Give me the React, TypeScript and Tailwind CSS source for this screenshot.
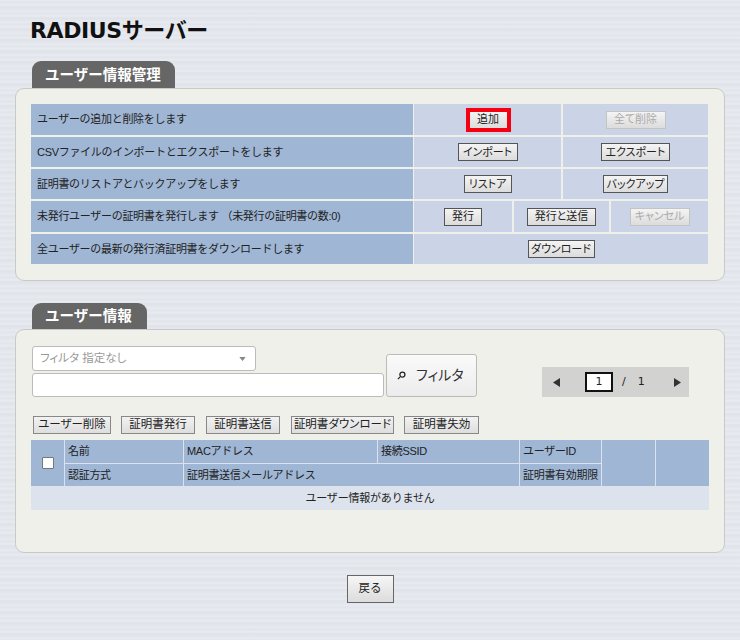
const font = "font-['Liberation_Sans','Noto_Sans_CJK_JP',sans-serif]";
const palt = "[font-feature-settings:'palt']";

function Btn({ label, w, disabled, red }: { label: string; w: string; disabled?: boolean; red?: boolean }) {
  return (
    <button
      className={`${w} shrink-0 whitespace-nowrap flex items-center justify-center text-[11px] leading-none [font-feature-settings:'palt'] bg-gradient-to-b from-[#f4f4f4] to-[#dcdcdc] ${
        red
          ? "ml-[1px] h-[24px] border-[4px] border-[#f40010] text-[#222]"
          : disabled
            ? "h-[18px] border border-[#c4c4c4] text-[#aaa]"
            : "h-[18px] border border-[#555] text-[#222]"
      }`}
    >
      {label}
    </button>
  );
}

function Cell({ className, children }: { className?: string; children: React.ReactNode }) {
  return <div className={`bg-[#cbd4e6] flex items-center justify-center ${className ?? ""}`}>{children}</div>;
}

function MgmtRow({ label, h, children }: { label: string; h: string; children: React.ReactNode }) {
  return (
    <div className={`flex gap-[1px] ${h}`}>
      <div className="w-[382px] bg-[#9fb6d4] flex items-center pl-[6px] text-[11px] tracking-[-0.3px] text-[#222] whitespace-pre">{label}</div>
      <div className="flex-1 flex gap-[2px]">{children}</div>
    </div>
  );
}

function Tab({ label, w, h }: { label: string; w: string; h: string }) {
  return (
    <div className={`${w} ${h} ml-[32px] pt-[2px] bg-[#666] rounded-t-[9px] text-white font-bold text-[14.5px] flex items-center pl-[13px]`}>
      {label}
    </div>
  );
}

function Small({ label, w }: { label: string; w: string }) {
  return (
    <button className={`${w} h-[18px] shrink-0 whitespace-nowrap flex items-center justify-center text-[11.5px] leading-none [font-feature-settings:'palt'] text-[#222] bg-gradient-to-b from-[#f2f2f2] to-[#dedede] border border-[#888]`}>
      {label}
    </button>
  );
}

function Th({ className, children }: { className?: string; children?: React.ReactNode }) {
  return <div className={`bg-[#9fb6d4] flex items-center pl-[3px] text-[11px] tracking-[-0.3px] text-[#222] whitespace-nowrap ${className ?? ""}`}>{children}</div>;
}

export default function App() {
  return (
    <div
      className={`${font} w-[740px] h-[640px] overflow-hidden flex flex-col bg-[#e4e7ed] bg-[repeating-linear-gradient(180deg,#e9ecf1_0px,#e1e4ea_2px,#e8ebf0_5px,#dfe2e8_7px,#e6e9ee_11px)]`}
    >
      <h1 className="ml-[30px] mt-[16px] h-[29px] leading-[29px] text-[22px] font-bold text-[#111] font-['DejaVu_Sans','Noto_Sans_CJK_JP',sans-serif] tracking-[-0.4px]">
        RADIUSサーバー
      </h1>

      <div className="mt-[16px]">
        <Tab label="ユーザー情報管理" w="w-[143px]" h="h-[27px]" />
      </div>
      <section className="mx-[15px] w-[710px] h-[193px] bg-[#f0f0ea] border border-[#c9c9c6] rounded-[9px] pt-[15px] pl-[15px]">
        <div className="flex flex-col gap-[2px] w-[677px]">
          <MgmtRow label="ユーザーの追加と削除をします" h="h-[31px]">
            <Cell className="flex-1"><Btn label="追加" w="w-[45px]" red /></Cell>
            <Cell className="w-[145px]"><Btn label="全て削除" w="w-[60px]" disabled /></Cell>
          </MgmtRow>
          <MgmtRow label="CSVファイルのインポートとエクスポートをします" h="h-[30px]">
            <Cell className="flex-1"><Btn label="インポート" w="w-[60px]" /></Cell>
            <Cell className="w-[145px]"><Btn label="エクスポート" w="w-[69px]" /></Cell>
          </MgmtRow>
          <MgmtRow label="証明書のリストアとバックアップをします" h="h-[30px]">
            <Cell className="flex-1"><Btn label="リストア" w="w-[48px]" /></Cell>
            <Cell className="w-[145px]"><Btn label="バックアップ" w="w-[65px]" /></Cell>
          </MgmtRow>
          <MgmtRow label="未発行ユーザーの証明書を発行します （未発行の証明書の数:0)" h="h-[31px]">
            <Cell className="flex-1"><Btn label="発行" w="w-[38px]" /></Cell>
            <Cell className="w-[95px]"><Btn label="発行と送信" w="w-[69px]" /></Cell>
            <Cell className="w-[97px]"><Btn label="キャンセル" w="w-[60px]" disabled /></Cell>
          </MgmtRow>
          <MgmtRow label="全ユーザーの最新の発行済証明書をダウンロードします" h="h-[30px]">
            <Cell className="flex-1"><Btn label="ダウンロード" w="w-[67px]" /></Cell>
          </MgmtRow>
        </div>
      </section>

      <div className="mt-[22px]">
        <Tab label="ユーザー情報" w="w-[115px]" h="h-[26px]" />
      </div>
      <section className="mx-[15px] w-[710px] h-[224px] bg-[#f0f0ea] border border-[#c9c9c6] rounded-[9px] pt-[16px] pl-[15px]">
        <div className="flex items-end h-[51px]">
          <div className="flex flex-col gap-[2px] w-[352px] ml-[1px]">
            <div className={`w-[224px] h-[25px] bg-white border border-[#bbb] rounded-[3px] flex items-center justify-between pl-[7px] pr-[9px] text-[11.5px] text-[#999] ${palt}`}>
              <span>フィルタ 指定なし</span>
              <svg width="7" height="4" viewBox="0 0 8 5"><path d="M0 0h8L4 5z" fill="#888" /></svg>
            </div>
            <div className="h-[24px] bg-white border border-[#bbb] rounded-[3px]" />
          </div>
          <button className={`ml-[2px] w-[91px] h-[43px] bg-gradient-to-b from-[#fafafa] to-[#ececec] border border-[#bbb] rounded-[3px] flex items-center pl-[10px] gap-[10px] text-[14px] text-[#333] ${palt}`}>
            <svg width="9" height="9" viewBox="0 0 10 10" fill="none" stroke="#222" strokeWidth="1.4"><circle cx="6" cy="4" r="2.8" /><path d="M4 6 1 9" /></svg>
            フィルタ
          </button>
          <div className="ml-[65px] w-[147px] h-[30px] bg-[#d2d2d0] flex items-center text-[11px] text-[#222] font-['DejaVu_Sans',sans-serif]">
            <svg className="ml-[11px]" width="7" height="9" viewBox="0 0 7 9"><path d="M7 0v9L0 4.5z" fill="#333" /></svg>
            <div className="ml-[25px] w-[28px] h-[20px] bg-white border-2 border-[#111] flex items-center justify-center">1</div>
            <span className="ml-[9px]">/</span>
            <span className="ml-[12px]">1</span>
            <svg className="ml-[29px]" width="7" height="9" viewBox="0 0 7 9"><path d="M0 0v9l7-4.5z" fill="#333" /></svg>
          </div>
        </div>

        <div className="flex mt-[19px] ml-[2px]">
          <Small label="ユーザー削除" w="w-[78px]" />
          <div className="ml-[10px]"><Small label="証明書発行" w="w-[74px]" /></div>
          <div className="ml-[11px]"><Small label="証明書送信" w="w-[74px]" /></div>
          <div className="ml-[11px]"><Small label="証明書ダウンロード" w="w-[103px]" /></div>
          <div className="ml-[10px]"><Small label="証明書失効" w="w-[75px]" /></div>
        </div>

        <div className="mt-[6px] w-[678px]">
          <div className="grid grid-cols-[33px_118px_193px_141px_81px_53px_1fr] grid-rows-[23px_22px] gap-[1px] bg-[#dbe2ee]">
            <Th className="row-span-2 justify-center !pl-0">
              <span className="w-[12px] h-[12px] bg-white border border-[#777] rounded-[1px]" />
            </Th>
            <Th>名前</Th>
            <Th>MACアドレス</Th>
            <Th>接続SSID</Th>
            <Th>ユーザーID</Th>
            <Th className="row-span-2" />
            <Th className="row-span-2" />
            <Th>認証方式</Th>
            <Th className="col-span-2">証明書送信メールアドレス</Th>
            <Th>証明書有効期限</Th>
          </div>
          <div className="h-[24px] bg-[#dde3ed] flex items-center justify-center text-[11px] tracking-[-0.2px] text-[#222]">
            ユーザー情報がありません
          </div>
        </div>
      </section>

      <div className="flex justify-center mt-[22px]">
        <button className="w-[47px] h-[28px] bg-gradient-to-b from-[#f6f6f6] to-[#dcdcdc] border border-[#666] text-[11.5px] text-[#222]">
          戻る
        </button>
      </div>
    </div>
  );
}
